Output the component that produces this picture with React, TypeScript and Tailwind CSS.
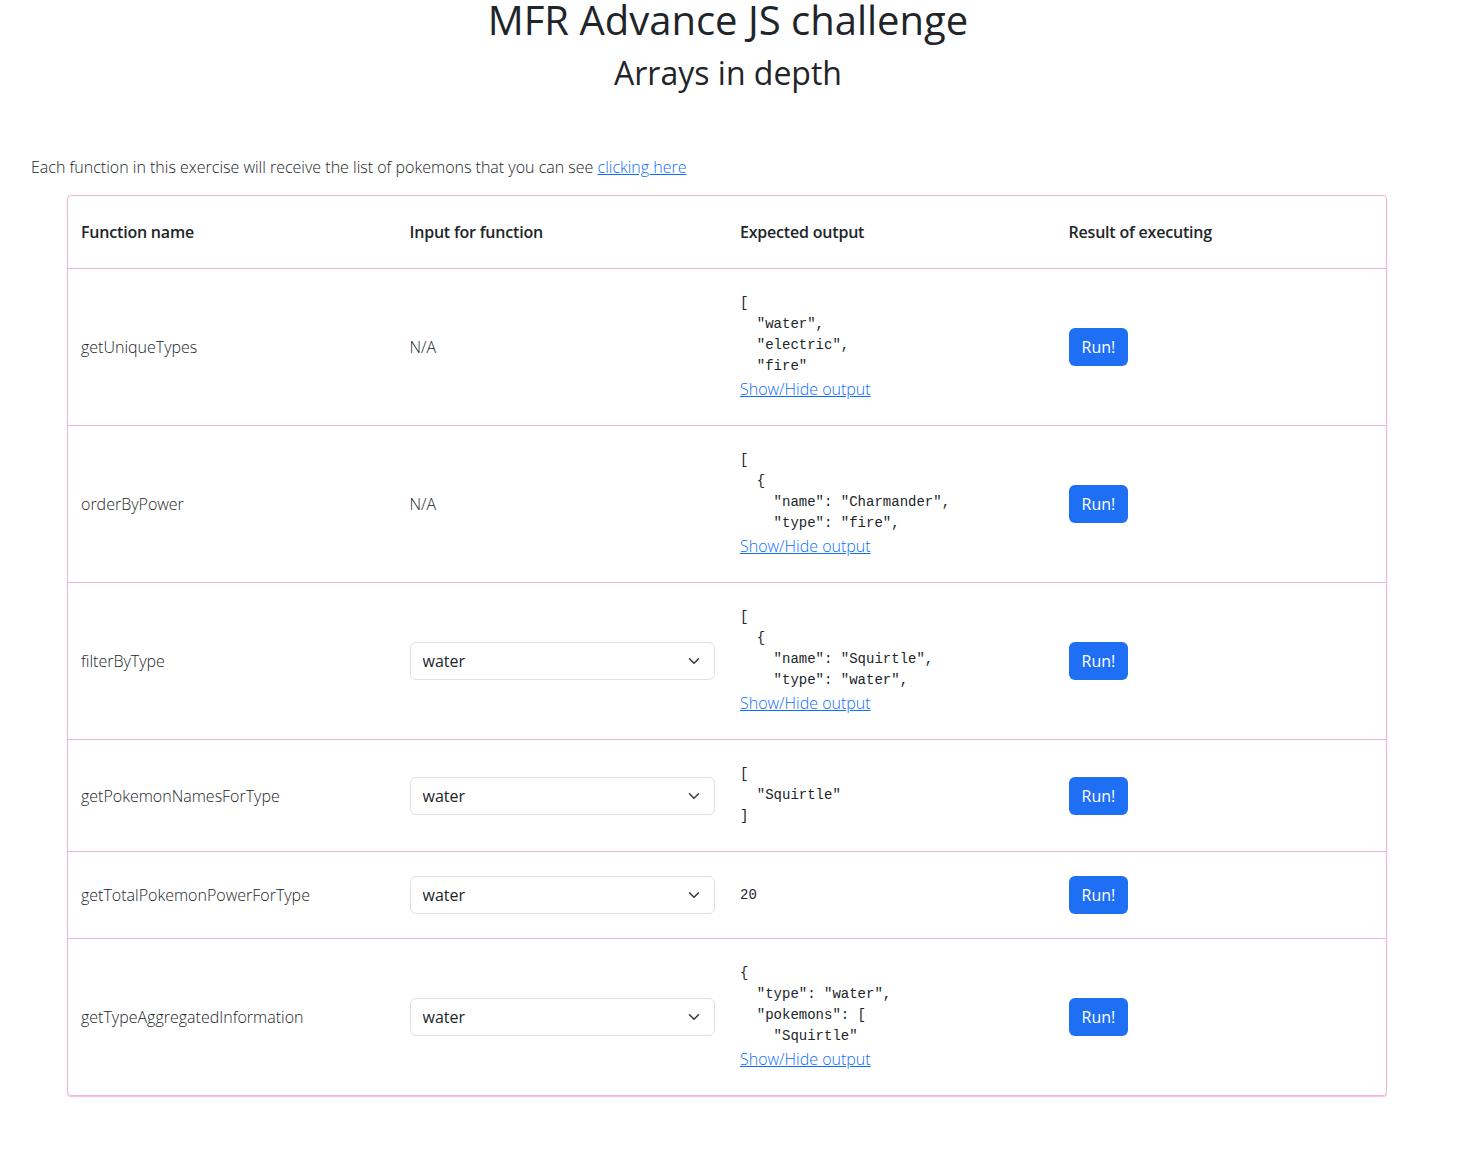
import React, { useState } from "react";

type Row = {
  name: string;
  hasInput: boolean;
  output: string;
  toggle: boolean;
};

const rows: Row[] = [
  {
    name: "getUniqueTypes",
    hasInput: false,
    output: '[\n  "water",\n  "electric",\n  "fire"\n]',
    toggle: true,
  },
  {
    name: "orderByPower",
    hasInput: false,
    output: '[\n  {\n    "name": "Charmander",\n    "type": "fire",\n    "power": 10\n  }\n]',
    toggle: true,
  },
  {
    name: "filterByType",
    hasInput: true,
    output: '[\n  {\n    "name": "Squirtle",\n    "type": "water",\n    "power": 20\n  }\n]',
    toggle: true,
  },
  {
    name: "getPokemonNamesForType",
    hasInput: true,
    output: '[\n  "Squirtle"\n]',
    toggle: false,
  },
  {
    name: "getTotalPokemonPowerForType",
    hasInput: true,
    output: "20",
    toggle: false,
  },
  {
    name: "getTypeAggregatedInformation",
    hasInput: true,
    output: '{\n  "type": "water",\n  "pokemons": [\n    "Squirtle"\n  ]\n}',
    toggle: true,
  },
];

function TypeSelect() {
  const [value, setValue] = useState("water");
  return (
    <div className="relative w-[305px]">
      <select
        value={value}
        onChange={(e) => setValue(e.target.value)}
        className="w-full h-[38px] appearance-none rounded-[6px] border border-[#dee2e6] bg-white pl-[12px] pr-9 text-[16px] font-normal text-[#212529] outline-none"
      >
        <option value="water">water</option>
        <option value="electric">electric</option>
        <option value="fire">fire</option>
      </select>
      <svg
        className="pointer-events-none absolute right-[15px] top-[13px]"
        width="12"
        height="12"
        viewBox="0 0 16 16"
      >
        <path
          d="m2 5 6 6 6-6"
          fill="none"
          stroke="#343a40"
          strokeWidth="2"
          strokeLinecap="round"
          strokeLinejoin="round"
        />
      </svg>
    </div>
  );
}

function OutputCell({ row }: { row: Row }) {
  const [open, setOpen] = useState(false);
  // collapsed output only shows the first 4 lines
  const text =
    row.toggle && !open ? row.output.split("\n").slice(0, 4).join("\n") : row.output;
  return (
    <div>
      <pre className="m-0 font-['Liberation_Mono',monospace] text-[14px] leading-[21px] text-[#212529] whitespace-pre">
        {text}
      </pre>
      {row.toggle && (
        <a
          href="#"
          onClick={(e) => {
            e.preventDefault();
            setOpen((s) => !s);
          }}
          className="mt-[2px] mb-[1px] block w-fit leading-[21px] text-[#0d6efd] underline"
        >
          Show/Hide output
        </a>
      )}
    </div>
  );
}

export default function App() {
  return (
    <div className="min-h-[1159px] bg-white font-['Open_Sans',sans-serif] font-light text-[16px] text-[#212529]">
      <h1 className="pr-[4px] text-center text-[40px] leading-none font-normal">
        MFR Advance JS challenge
      </h1>
      <h2 className="mt-[17px] pr-[4px] text-center text-[32px] leading-none font-normal">
        Arrays in depth
      </h2>

      <p className="mt-[66px] pl-[31px] leading-[24px]">
        Each function in this exercise will receive the list of pokemons that you can see{" "}
        <a href="#" className="text-[#0d6efd] underline">
          clicking here
        </a>
      </p>

      <div className="mt-4 ml-[67px] w-[1320px] overflow-hidden rounded-[4px] border border-[#f1b6d6] shadow-[0_1px_1px_rgba(241,182,214,0.9)]">
        <table className="w-full table-fixed border-collapse">
          <thead>
            <tr className="border-b border-[#f1b6d6]">
              <th className="py-6 pl-[13px] text-left font-semibold tracking-[-0.2px] leading-[24px]">Function name</th>
              <th className="py-6 pl-[12px] text-left font-semibold tracking-[-0.2px] leading-[24px]">Input for function</th>
              <th className="py-6 pl-[13px] text-left font-semibold tracking-[-0.2px] leading-[24px]">Expected output</th>
              <th className="py-6 pl-[12px] text-left font-semibold tracking-[-0.2px] leading-[24px]">Result of executing</th>
            </tr>
          </thead>
          <tbody>
            {rows.map((row, i) => (
              <tr
                key={row.name}
                className={i < rows.length - 1 ? "border-b border-[#f1b6d6]" : ""}
              >
                <td className="py-6 pl-[13px] align-middle leading-[24px]">{row.name}</td>
                <td className="py-6 pl-[12px] align-middle leading-[24px]">
                  {row.hasInput ? <TypeSelect /> : "N/A"}
                </td>
                <td className="py-6 pl-[13px] align-middle">
                  <OutputCell row={row} />
                </td>
                <td className="py-6 pl-[12px] align-middle">
                  <button className="h-[38px] rounded-[6px] bg-[#1f6ff5] px-[13px] text-[16px] font-normal text-white">
                    Run!
                  </button>
                </td>
              </tr>
            ))}
          </tbody>
        </table>
      </div>
    </div>
  );
}
